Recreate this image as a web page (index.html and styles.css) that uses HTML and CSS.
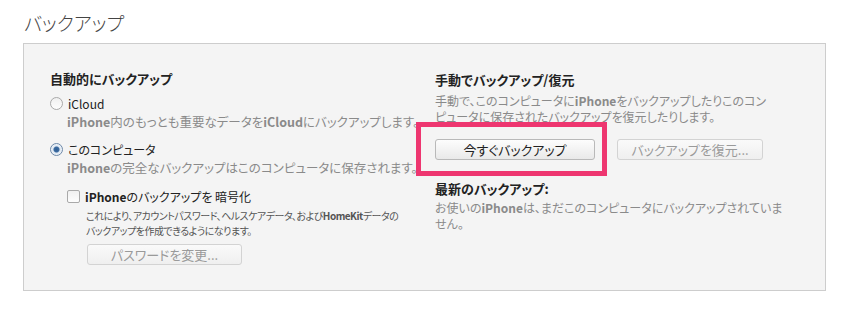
FILE: index.html
```html
<!DOCTYPE html>
<html lang="ja">
<head>
  <meta charset="utf-8">
  <title>バックアップ</title>
  <link rel="stylesheet" href="styles.css">
</head>
<body>

<h1 class="title">バックアップ</h1>

<div class="panel">
  <div class="col left">
    <h2 class="heading">自動的にバックアップ</h2>

    <div class="option">
      <span class="radio"></span>
      <span class="label">iCloud</span>
    </div>
    <p class="desc"><b>iPhone</b>内のもっとも重要なデータを<b>iCloud</b>にバックアップします。</p>

    <div class="option gap">
      <span class="radio checked"></span>
      <span class="label">このコンピュータ</span>
    </div>
    <p class="desc"><b>iPhone</b>の完全なバックアップはこのコンピュータに保存されます。</p>

    <div class="sub">
      <div class="option">
        <span class="check"></span>
        <span class="label"><b>iPhone</b>のバックアップを 暗号化</span>
      </div>
      <p class="small">これにより、アカウントパスワード、ヘルスケアデータ、および<b>HomeKit</b>データの<br>バックアップを作成できるようになります。</p>
      <button class="btn disabled pw">パスワードを変更...</button>
    </div>
  </div>

  <div class="col right">
    <h2 class="heading top">手動でバックアップ/復元</h2>
    <p class="desc wide">手動で、このコンピュータに<b>iPhone</b>をバックアップしたりこのコン<br>ピュータに保存されたバックアップを復元したりします。</p>

    <div class="buttons">
      <button class="btn marked now">今すぐバックアップ</button>
      <button class="btn disabled restore">バックアップを復元...</button>
    </div>

    <h2 class="heading latest">最新のバックアップ:</h2>
    <p class="desc wide after">お使いの<b>iPhone</b>は、まだこのコンピュータにバックアップされていま<br>せん。</p>
  </div>
</div>

</body>
</html>
```

FILE: styles.css
```css
body, html { margin: 0; padding: 0; background: #fff; }
body {
  font-family: "Noto Sans CJK JP", "Noto Sans", sans-serif;
  font-feature-settings: "palt";
  color: #222;
}

.title {
  margin: 0;
  padding: 11px 0 0 24px;
  height: 32px;
  font-size: 19px;
  line-height: 24px;
  font-weight: 300;
  color: #444;
}

.panel {
  margin-left: 23px;
  width: 803px;
  height: 248px;
  box-sizing: border-box;
  border: 1px solid #cdcdcd;
  background: #f4f4f4;
  display: grid;
  grid-template-columns: 385px 1fr;
  padding: 27px 0 0 26px;
}

.col { min-width: 0; }

.heading {
  margin: 0;
  font-size: 13px;
  line-height: 16px;
  font-weight: bold;
  color: #222;
}
.heading.top { margin-top: 1px; }

.option {
  display: flex;
  align-items: center;
  margin-top: 8px;
  height: 16px;
  font-size: 12px;
  color: #222;
  white-space: nowrap;
}
.option.gap { margin-top: 11px; }

.radio {
  width: 11px;
  height: 11px;
  border: 1px solid #a9a9a9;
  border-radius: 50%;
  background: linear-gradient(#f0f0f0, #fdfdfd);
  margin-right: 5px;
}
.radio.checked {
  border-color: #6c88a8;
  background: radial-gradient(circle, #2f5e93 0, #3a6aa0 2.5px, #dce6f1 3.5px, #f6f8fb 6px);
}

.check {
  width: 11px;
  height: 11px;
  border: 1px solid #a9a9a9;
  border-radius: 2px;
  background: linear-gradient(#f0f0f0, #fdfdfd);
  margin-right: 5px;
}

.desc {
  margin: 3px 0 0 17px;
  font-size: 12.5px;
  line-height: 16px;
  color: #8a8a8a;
  white-space: nowrap;
}
.desc b { font-weight: bold; }
.desc.wide { margin-left: 0; margin-top: 5px; font-size: 12px; }
.desc.after { margin-top: 3px; }

.sub {
  margin: 12px 0 0 17px;
}
.sub .label b { font-weight: bold; }

.small {
  margin: 5px 0 0 19px;
  font-size: 10px;
  line-height: 14.5px;
  letter-spacing: -0.5px;
  color: #555;
  white-space: nowrap;
}

.btn {
  display: block;
  height: 21px;
  box-sizing: border-box;
  border: 1px solid #b9b9b9;
  border-radius: 3px;
  background: linear-gradient(#fdfdfd, #e9e9e9);
  font-family: inherit;
  font-feature-settings: "palt";
  font-size: 13px;
  line-height: 18px;
  padding: 0;
  color: #222;
}
.btn.disabled {
  color: #9a9a9a;
  border-color: #d3d3d3;
  background: linear-gradient(#fafafa, #efefef);
}

.pw {
  width: 155px;
  margin: 6px 0 0 20px;
}

.buttons {
  display: flex;
  gap: 22px;
  margin-top: 14px;
}
.now { width: 160px; position: relative; }
.restore { width: 146px; }

/* pink annotation frame around the button */
.marked::after {
  content: "";
  position: absolute;
  left: -20px;
  top: -18px;
  right: -13px;
  bottom: -17px;
  border: 5px solid #ee3670;
}

.heading.latest { margin-top: 21px; }
```
